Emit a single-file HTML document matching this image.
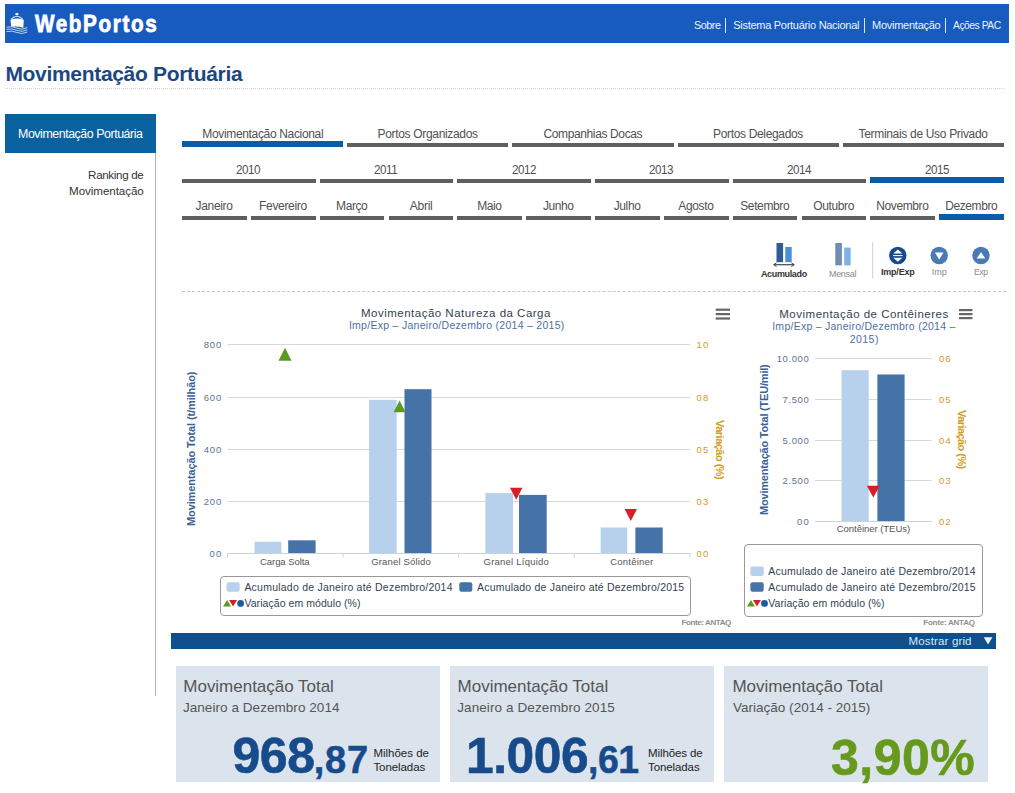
<!DOCTYPE html>
<html lang="pt-BR"><head><meta charset="utf-8"><title>WebPortos - Movimentação Portuária</title>
<style>
html,body{margin:0;padding:0;background:#fff;width:1015px;height:793px;overflow:hidden}
body{position:relative;font-family:"Liberation Sans", sans-serif}
.t{position:absolute;white-space:nowrap;line-height:1;font-family:"Liberation Sans", sans-serif}
svg{position:absolute;left:0;top:0;overflow:visible}
</style></head><body>
<div style="position:absolute;left:5.00px;top:4.00px;width:1004.00px;height:39.00px;background:#175bbe;"></div>
<svg width="1015" height="60" viewBox="0 0 1015 60" style="left:0;top:0">
<ellipse cx="16.9" cy="14.1" rx="1.7" ry="1.2" fill="#fff"/>
<path d="M10.9 19.4 Q16.9 13.0 23 19.4" stroke="#d6e4f8" stroke-width="1.1" fill="none"/>
<path d="M10.4 19.9 Q16.9 17.2 23.8 19.9 L23.3 27.8 Q17.2 25.6 11.3 26.8 Z" fill="#fff"/>
<g fill="none" stroke="#bcd3f3" stroke-width="1">
<path d="M6.5 27.2 Q12 25.8 17 28.1 T27.3 27.6"/>
<path d="M6.5 29.4 Q12 28 17 30.3 T27.3 29.8"/>
<path d="M6.5 31.6 Q12 30.2 17 32.5 T27.3 32"/>
</g>
</svg>
<div style="position:absolute;left:725.00px;top:18.00px;width:1.00px;height:15.00px;background:#dfe8f6;"></div>
<div style="position:absolute;left:864.00px;top:18.00px;width:1.00px;height:15.00px;background:#dfe8f6;"></div>
<div style="position:absolute;left:945.20px;top:18.00px;width:1.00px;height:15.00px;background:#dfe8f6;"></div>
<div style="position:absolute;left:5px;top:88px;width:1000px;height:1px;background:repeating-linear-gradient(90deg,#d4d4d4 0 1px,#fff 1px 2px)"></div>
<div style="position:absolute;left:5.00px;top:114.00px;width:151.00px;height:39.00px;background:#0a61a0;"></div>
<div style="position:absolute;left:155.00px;top:153.00px;width:1.00px;height:542.50px;background:#b3b3b3;"></div>
<div style="position:absolute;left:182.00px;top:141.00px;width:161.20px;height:6.00px;background:#0b5ca6;"></div>
<div style="position:absolute;left:347.20px;top:143.00px;width:161.20px;height:4.00px;background:#5f5f5f;"></div>
<div style="position:absolute;left:512.40px;top:143.00px;width:161.20px;height:4.00px;background:#5f5f5f;"></div>
<div style="position:absolute;left:677.60px;top:143.00px;width:161.20px;height:4.00px;background:#5f5f5f;"></div>
<div style="position:absolute;left:842.80px;top:143.00px;width:161.20px;height:4.00px;background:#5f5f5f;"></div>
<div style="position:absolute;left:182.00px;top:179.30px;width:133.67px;height:4.00px;background:#5f5f5f;"></div>
<div style="position:absolute;left:319.67px;top:179.30px;width:133.67px;height:4.00px;background:#5f5f5f;"></div>
<div style="position:absolute;left:457.33px;top:179.30px;width:133.67px;height:4.00px;background:#5f5f5f;"></div>
<div style="position:absolute;left:595.00px;top:179.30px;width:133.67px;height:4.00px;background:#5f5f5f;"></div>
<div style="position:absolute;left:732.67px;top:179.30px;width:133.67px;height:4.00px;background:#5f5f5f;"></div>
<div style="position:absolute;left:870.33px;top:177.30px;width:133.67px;height:6.00px;background:#0b5ca6;"></div>
<div style="position:absolute;left:182.00px;top:215.80px;width:64.83px;height:4.00px;background:#5f5f5f;"></div>
<div style="position:absolute;left:250.83px;top:215.80px;width:64.83px;height:4.00px;background:#5f5f5f;"></div>
<div style="position:absolute;left:319.67px;top:215.80px;width:64.83px;height:4.00px;background:#5f5f5f;"></div>
<div style="position:absolute;left:388.50px;top:215.80px;width:64.83px;height:4.00px;background:#5f5f5f;"></div>
<div style="position:absolute;left:457.33px;top:215.80px;width:64.83px;height:4.00px;background:#5f5f5f;"></div>
<div style="position:absolute;left:526.17px;top:215.80px;width:64.83px;height:4.00px;background:#5f5f5f;"></div>
<div style="position:absolute;left:595.00px;top:215.80px;width:64.83px;height:4.00px;background:#5f5f5f;"></div>
<div style="position:absolute;left:663.83px;top:215.80px;width:64.83px;height:4.00px;background:#5f5f5f;"></div>
<div style="position:absolute;left:732.67px;top:215.80px;width:64.83px;height:4.00px;background:#5f5f5f;"></div>
<div style="position:absolute;left:801.50px;top:215.80px;width:64.83px;height:4.00px;background:#5f5f5f;"></div>
<div style="position:absolute;left:870.33px;top:215.80px;width:64.83px;height:4.00px;background:#5f5f5f;"></div>
<div style="position:absolute;left:939.17px;top:213.80px;width:64.83px;height:6.00px;background:#0b5ca6;"></div>
<svg width="1015" height="300" viewBox="0 0 1015 300">
<rect x="776.5" y="243" width="6.6" height="19.2" fill="#2f5b95"/>
<rect x="785.3" y="247" width="6.4" height="15.2" fill="#4a8fd6"/>
<path d="M774.2 264.7 H793.7" stroke="#444" stroke-width="1.2"/>
<path d="M776.5 262.9 L773.6 264.7 L776.5 266.5 M791.4 262.9 L794.3 264.7 L791.4 266.5" stroke="#444" stroke-width="1" fill="none"/>
<rect x="835.3" y="243" width="6.6" height="22.4" fill="#6f8cb4"/>
<rect x="844.2" y="247.6" width="6.4" height="17.8" fill="#7fb0e3"/>
<rect x="872.2" y="242" width="1" height="36.6" fill="#cfcfcf"/>
<circle cx="897.8" cy="255.5" r="8.7" fill="#174a8c"/>
<path d="M893.3 253.5 L897.8 249.4 L902.3 253.5 Z M893.3 257.7 L897.8 261.8 L902.3 257.7 Z" fill="#fff"/>
<rect x="893" y="255.1" width="9.6" height="1" fill="#fff"/>
<circle cx="939.2" cy="255.5" r="8.7" fill="#4a79b3"/>
<path d="M934.9 252.5 H943.5 L939.2 259.4 Z" fill="#fff"/>
<circle cx="981" cy="255.5" r="8.7" fill="#4a79b3"/>
<path d="M976.7 258.6 H985.3 L981 252 Z" fill="#fff"/>
</svg>
<div style="position:absolute;left:182px;top:291px;width:824px;height:0;border-top:1px dashed #c8c8c8"></div>
<svg width="1015" height="793" viewBox="0 0 1015 793">
<rect x="715.7" y="308.60" width="14.30" height="2.2" fill="#666"/>
<rect x="715.7" y="313.00" width="14.30" height="2.2" fill="#666"/>
<rect x="715.7" y="317.40" width="14.30" height="2.2" fill="#666"/>
<rect x="227.5" y="344" width="462.4" height="1" fill="#d8d8d8"/>
<rect x="227.5" y="397" width="462.4" height="1" fill="#d8d8d8"/>
<rect x="227.5" y="449" width="462.4" height="1" fill="#d8d8d8"/>
<rect x="227.5" y="501" width="462.4" height="1" fill="#d8d8d8"/>
<rect x="227.5" y="553" width="462.4" height="1" fill="#c9d3dc"/>
<rect x="227.00" y="553" width="1" height="4.5" fill="#c9d3dc"/>
<rect x="342.60" y="553" width="1" height="4.5" fill="#c9d3dc"/>
<rect x="458.20" y="553" width="1" height="4.5" fill="#c9d3dc"/>
<rect x="573.80" y="553" width="1" height="4.5" fill="#c9d3dc"/>
<rect x="689.40" y="553" width="1" height="4.5" fill="#c9d3dc"/>
<rect x="254.5" y="541.7" width="26.90" height="11.30" fill="#b7d1ec"/>
<rect x="288.2" y="540.3" width="27.40" height="12.70" fill="#4573a7"/>
<rect x="369.1" y="399.8" width="27.60" height="153.20" fill="#b7d1ec"/>
<rect x="404.5" y="389.2" width="27.00" height="163.80" fill="#4573a7"/>
<rect x="485.4" y="493.1" width="27.60" height="59.90" fill="#b7d1ec"/>
<rect x="519.0" y="494.9" width="27.70" height="58.10" fill="#4573a7"/>
<rect x="600.6" y="527.5" width="26.60" height="25.50" fill="#b7d1ec"/>
<rect x="635.4" y="527.5" width="27.30" height="25.50" fill="#4573a7"/>
<path d="M278.50 360.70 L285.00 347.70 L291.50 360.70 Z" fill="#5a9a1c"/>
<path d="M393.60 412.20 L399.60 400.50 L405.60 412.20 Z" fill="#5a9a1c"/>
<path d="M509.95 487.80 L516.20 499.80 L522.45 487.80 Z" fill="#d81f26"/>
<path d="M624.55 509.00 L630.80 521.00 L637.05 509.00 Z" fill="#d81f26"/>
<rect x="220.5" y="576.5" width="470" height="39" rx="3.5" ry="3.5" fill="none" stroke="#999" stroke-width="1"/>
<rect x="226.6" y="582.3" width="13" height="9.5" rx="2" fill="#b7d1ec"/>
<rect x="459.3" y="582.3" width="13" height="9.5" rx="2" fill="#4573a7"/>
<path d="M223.10 606.60 L227.05 600.10 L231.00 606.60 Z" fill="#5a9a1c"/>
<path d="M229.10 600.10 L233.05 606.60 L237.00 600.10 Z" fill="#d81f26"/>
<circle cx="240.60" cy="603.40" r="3.4" fill="#1b5ba6"/>
<rect x="959" y="309.00" width="13.50" height="2.2" fill="#666"/>
<rect x="959" y="313.00" width="13.50" height="2.2" fill="#666"/>
<rect x="959" y="317.00" width="13.50" height="2.2" fill="#666"/>
<rect x="814.8" y="358" width="117" height="1" fill="#d8d8d8"/>
<rect x="814.8" y="399" width="117" height="1" fill="#d8d8d8"/>
<rect x="814.8" y="440" width="117" height="1" fill="#d8d8d8"/>
<rect x="814.8" y="480" width="117" height="1" fill="#d8d8d8"/>
<rect x="814.8" y="521" width="117" height="1" fill="#c9d3dc"/>
<rect x="841.5" y="370.2" width="27.2" height="150.80" fill="#b7d1ec"/>
<rect x="877.4" y="374.5" width="27.2" height="146.50" fill="#4573a7"/>
<path d="M866.80 485.80 L873.30 497.60 L879.80 485.80 Z" fill="#d81f26"/>
<rect x="744.5" y="544.5" width="238" height="72" rx="3.5" ry="3.5" fill="none" stroke="#999" stroke-width="1"/>
<rect x="750.4" y="566.5" width="13.3" height="9.5" rx="2" fill="#b7d1ec"/>
<rect x="750.4" y="582.2" width="13.3" height="9.5" rx="2" fill="#4573a7"/>
<path d="M747.00 606.60 L750.95 600.10 L754.90 606.60 Z" fill="#5a9a1c"/>
<path d="M753.00 600.10 L756.95 606.60 L760.90 600.10 Z" fill="#d81f26"/>
<circle cx="764.50" cy="603.40" r="3.4" fill="#1b5ba6"/>
</svg>
<div style="position:absolute;left:171.00px;top:633.00px;width:824.70px;height:16.00px;background:#0e4f8c;"></div>
<svg width="1015" height="793" viewBox="0 0 1015 793"><path d="M983.7 637.3 H992.4 L988.05 644.6 Z" fill="#eef4fb"/></svg>
<div style="position:absolute;left:175.70px;top:666.30px;width:264.30px;height:116.00px;background:#dbe4ed;"></div>
<div style="position:absolute;left:450.00px;top:666.30px;width:263.70px;height:116.00px;background:#dbe4ed;"></div>
<div style="position:absolute;left:724.00px;top:666.30px;width:264.40px;height:116.00px;background:#dbe4ed;"></div>
<div class="t" style="left:34.80px;top:12.00px;font-size:24px;font-weight:bold;color:#fff;letter-spacing:1.910px;-webkit-text-stroke:0.8px #fff;transform-origin:0 0;transform:scaleX(0.86)">WebPortos</div>
<div class="t" style="left:693.70px;top:20.00px;font-size:11px;font-weight:normal;color:#eef3fb;letter-spacing:-0.460px;;transform-origin:0 0;transform:scaleX(0.9782676954938689)">Sobre</div>
<div class="t" style="left:733.30px;top:20.00px;font-size:11px;font-weight:normal;color:#eef3fb;letter-spacing:-0.286px;">Sistema Portuário Nacional</div>
<div class="t" style="left:872.00px;top:20.00px;font-size:11px;font-weight:normal;color:#eef3fb;letter-spacing:-0.256px;">Movimentação</div>
<div class="t" style="left:953.20px;top:20.00px;font-size:11px;font-weight:normal;color:#eef3fb;letter-spacing:-0.482px;;transform-origin:0 0;transform:scaleX(0.933571522858273)">Ações PAC</div>
<div class="t" style="left:5.40px;top:63.00px;font-size:21px;font-weight:bold;color:#1a4782;letter-spacing:-0.315px;">Movimentação Portuária</div>
<div class="t" style="left:18.01px;top:128.00px;font-size:12.5px;font-weight:normal;color:#fff;letter-spacing:-0.454px;;transform-origin:0 0;transform:scaleX(0.9919880368621443)">Movimentação Portuária</div>
<div class="t" style="left:88.10px;top:169.00px;font-size:11.6px;font-weight:normal;color:#333;letter-spacing:-0.334px;">Ranking de</div>
<div class="t" style="left:69.10px;top:185.00px;font-size:11.6px;font-weight:normal;color:#333;letter-spacing:-0.068px;">Movimentação</div>
<div class="t" style="left:202.28px;top:128.00px;font-size:12px;font-weight:normal;color:#505050;letter-spacing:-0.338px;">Movimentação Nacional</div>
<div class="t" style="left:377.58px;top:128.00px;font-size:12px;font-weight:normal;color:#505050;letter-spacing:-0.331px;">Portos Organizados</div>
<div class="t" style="left:543.42px;top:128.00px;font-size:12px;font-weight:normal;color:#505050;letter-spacing:-0.370px;">Companhias Docas</div>
<div class="t" style="left:713.03px;top:128.00px;font-size:12px;font-weight:normal;color:#505050;letter-spacing:-0.337px;">Portos Delegados</div>
<div class="t" style="left:858.51px;top:128.00px;font-size:12px;font-weight:normal;color:#505050;letter-spacing:-0.316px;">Terminais de Uso Privado</div>
<div class="t" style="left:236.40px;top:164.00px;font-size:12px;font-weight:normal;color:#505050;letter-spacing:-0.464px;;transform-origin:0 0;transform:scaleX(0.9699602457535246)">2010</div>
<div class="t" style="left:374.48px;top:164.00px;font-size:12px;font-weight:normal;color:#505050;letter-spacing:-0.463px;;transform-origin:0 0;transform:scaleX(0.9716630540399128)">2011</div>
<div class="t" style="left:511.74px;top:164.00px;font-size:12px;font-weight:normal;color:#505050;letter-spacing:-0.464px;;transform-origin:0 0;transform:scaleX(0.9699602457535225)">2012</div>
<div class="t" style="left:649.40px;top:164.00px;font-size:12px;font-weight:normal;color:#505050;letter-spacing:-0.464px;;transform-origin:0 0;transform:scaleX(0.9699602457535246)">2013</div>
<div class="t" style="left:787.07px;top:164.00px;font-size:12px;font-weight:normal;color:#505050;letter-spacing:-0.464px;;transform-origin:0 0;transform:scaleX(0.9699602457535246)">2014</div>
<div class="t" style="left:924.74px;top:164.00px;font-size:12px;font-weight:normal;color:#505050;letter-spacing:-0.464px;;transform-origin:0 0;transform:scaleX(0.9699602457535246)">2015</div>
<div class="t" style="left:195.57px;top:200.00px;font-size:12px;font-weight:normal;color:#505050;letter-spacing:-0.331px;">Janeiro</div>
<div class="t" style="left:259.02px;top:200.00px;font-size:12px;font-weight:normal;color:#505050;letter-spacing:-0.319px;">Fevereiro</div>
<div class="t" style="left:336.09px;top:200.00px;font-size:12px;font-weight:normal;color:#505050;letter-spacing:-0.421px;">Março</div>
<div class="t" style="left:409.83px;top:200.00px;font-size:12px;font-weight:normal;color:#505050;letter-spacing:-0.292px;">Abril</div>
<div class="t" style="left:477.24px;top:200.00px;font-size:12px;font-weight:normal;color:#505050;letter-spacing:-0.439px;">Maio</div>
<div class="t" style="left:542.90px;top:200.00px;font-size:12px;font-weight:normal;color:#505050;letter-spacing:-0.413px;">Junho</div>
<div class="t" style="left:613.64px;top:200.00px;font-size:12px;font-weight:normal;color:#505050;letter-spacing:-0.363px;">Julho</div>
<div class="t" style="left:678.35px;top:200.00px;font-size:12px;font-weight:normal;color:#505050;letter-spacing:-0.377px;">Agosto</div>
<div class="t" style="left:740.22px;top:200.00px;font-size:12px;font-weight:normal;color:#505050;letter-spacing:-0.374px;">Setembro</div>
<div class="t" style="left:813.17px;top:200.00px;font-size:12px;font-weight:normal;color:#505050;letter-spacing:-0.364px;">Outubro</div>
<div class="t" style="left:876.30px;top:200.00px;font-size:12px;font-weight:normal;color:#505050;letter-spacing:-0.398px;">Novembro</div>
<div class="t" style="left:945.14px;top:200.00px;font-size:12px;font-weight:normal;color:#505050;letter-spacing:-0.398px;">Dezembro</div>
<div class="t" style="left:760.90px;top:270.00px;font-size:9px;font-weight:bold;color:#333;letter-spacing:-0.338px;">Acumulado</div>
<div class="t" style="left:829.00px;top:270.00px;font-size:9px;font-weight:normal;color:#8a8a8a;letter-spacing:-0.323px;">Mensal</div>
<div class="t" style="left:881.00px;top:268.00px;font-size:9px;font-weight:bold;color:#333;letter-spacing:-0.218px;">Imp/Exp</div>
<div class="t" style="left:931.70px;top:268.00px;font-size:9px;font-weight:normal;color:#8a8a8a;letter-spacing:0.051px;">Imp</div>
<div class="t" style="left:974.00px;top:268.00px;font-size:9px;font-weight:normal;color:#8a8a8a;letter-spacing:-0.468px;;transform-origin:0 0;transform:scaleX(0.9611086614173229)">Exp</div>
<div class="t" style="left:361.00px;top:308.00px;font-size:11.5px;font-weight:normal;color:#333f50;letter-spacing:0.491px;">Movimentação Natureza da Carga</div>
<div class="t" style="left:348.90px;top:320.00px;font-size:10.5px;font-weight:normal;color:#4f6f9f;letter-spacing:0.285px;">Imp/Exp – Janeiro/Dezembro (2014 – 2015)</div>
<div class="t" style="left:203.78px;top:340.00px;font-size:9.5px;font-weight:normal;color:#5b7396;letter-spacing:0.778px;">800</div>
<div class="t" style="left:203.78px;top:393.00px;font-size:9.5px;font-weight:normal;color:#5b7396;letter-spacing:0.778px;">600</div>
<div class="t" style="left:203.78px;top:445.00px;font-size:9.5px;font-weight:normal;color:#5b7396;letter-spacing:0.778px;">400</div>
<div class="t" style="left:203.78px;top:497.00px;font-size:9.5px;font-weight:normal;color:#5b7396;letter-spacing:0.778px;">200</div>
<div class="t" style="left:209.59px;top:549.00px;font-size:9.5px;font-weight:normal;color:#5b7396;letter-spacing:1.028px;">00</div>
<div class="t" style="left:696.60px;top:340.00px;font-size:9.5px;font-weight:normal;color:#d29a1c;letter-spacing:1.028px;">10</div>
<div class="t" style="left:696.60px;top:393.00px;font-size:9.5px;font-weight:normal;color:#d29a1c;letter-spacing:1.028px;">08</div>
<div class="t" style="left:696.60px;top:445.00px;font-size:9.5px;font-weight:normal;color:#d29a1c;letter-spacing:1.028px;">05</div>
<div class="t" style="left:696.60px;top:497.00px;font-size:9.5px;font-weight:normal;color:#d29a1c;letter-spacing:1.028px;">03</div>
<div class="t" style="left:696.60px;top:549.00px;font-size:9.5px;font-weight:normal;color:#d29a1c;letter-spacing:1.028px;">00</div>
<div class="t" style="left:185.85px;top:525.80px;font-size:11px;font-weight:bold;color:#3a619a;letter-spacing:-0.108px;transform-origin:0 0;transform:rotate(-90deg)">Movimentação Total (t/milhão)</div>
<div class="t" style="left:724.55px;top:419.60px;font-size:11px;font-weight:bold;color:#d49a1a;letter-spacing:-0.514px;transform-origin:0 0;transform:rotate(90deg)">Variação (%)</div>
<div class="t" style="left:260.00px;top:557.00px;font-size:9.5px;font-weight:normal;color:#555;letter-spacing:-0.058px;">Carga Solta</div>
<div class="t" style="left:371.20px;top:557.00px;font-size:9.5px;font-weight:normal;color:#555;letter-spacing:0.160px;">Granel Sólido</div>
<div class="t" style="left:483.60px;top:557.00px;font-size:9.5px;font-weight:normal;color:#555;letter-spacing:0.220px;">Granel Líquido</div>
<div class="t" style="left:610.20px;top:557.00px;font-size:9.5px;font-weight:normal;color:#555;letter-spacing:0.234px;">Contêiner</div>
<div class="t" style="left:244.40px;top:582.00px;font-size:10.5px;font-weight:normal;color:#333f50;letter-spacing:0.230px;">Acumulado de Janeiro até Dezembro/2014</div>
<div class="t" style="left:477.00px;top:582.00px;font-size:10.5px;font-weight:normal;color:#333f50;letter-spacing:0.203px;">Acumulado de Janeiro até Dezembro/2015</div>
<div class="t" style="left:244.40px;top:598.00px;font-size:10.5px;font-weight:normal;color:#333f50;letter-spacing:0.063px;">Variação em módulo (%)</div>
<div class="t" style="left:681.40px;top:619.00px;font-size:8px;font-weight:bold;color:#8e8e8e;letter-spacing:-0.390px;">Fonte: ANTAQ</div>
<div class="t" style="left:779.30px;top:309.00px;font-size:11.5px;font-weight:normal;color:#333f50;letter-spacing:0.495px;">Movimentação de Contêineres</div>
<div class="t" style="left:772.20px;top:321.00px;font-size:10.5px;font-weight:normal;color:#4f6f9f;letter-spacing:0.262px;">Imp/Exp – Janeiro/Dezembro (2014 –</div>
<div class="t" style="left:849.80px;top:334.00px;font-size:10.5px;font-weight:normal;color:#4f6f9f;letter-spacing:0.435px;">2015)</div>
<div class="t" style="left:776.75px;top:354.00px;font-size:9.5px;font-weight:normal;color:#5b7396;letter-spacing:0.575px;">10.000</div>
<div class="t" style="left:782.56px;top:395.00px;font-size:9.5px;font-weight:normal;color:#5b7396;letter-spacing:0.587px;">7.500</div>
<div class="t" style="left:782.56px;top:436.00px;font-size:9.5px;font-weight:normal;color:#5b7396;letter-spacing:0.587px;">5.000</div>
<div class="t" style="left:782.56px;top:476.00px;font-size:9.5px;font-weight:normal;color:#5b7396;letter-spacing:0.587px;">2.500</div>
<div class="t" style="left:797.09px;top:517.00px;font-size:9.5px;font-weight:normal;color:#5b7396;letter-spacing:1.028px;">00</div>
<div class="t" style="left:938.90px;top:354.00px;font-size:9.5px;font-weight:normal;color:#d29a1c;letter-spacing:1.028px;">06</div>
<div class="t" style="left:938.90px;top:395.00px;font-size:9.5px;font-weight:normal;color:#d29a1c;letter-spacing:1.028px;">05</div>
<div class="t" style="left:938.90px;top:436.00px;font-size:9.5px;font-weight:normal;color:#d29a1c;letter-spacing:1.028px;">04</div>
<div class="t" style="left:938.90px;top:476.00px;font-size:9.5px;font-weight:normal;color:#d29a1c;letter-spacing:1.028px;">03</div>
<div class="t" style="left:938.90px;top:517.00px;font-size:9.5px;font-weight:normal;color:#d29a1c;letter-spacing:1.028px;">02</div>
<div class="t" style="left:758.85px;top:514.70px;font-size:11px;font-weight:bold;color:#3a619a;letter-spacing:-0.203px;transform-origin:0 0;transform:rotate(-90deg)">Movimentação Total (TEU/mil)</div>
<div class="t" style="left:966.55px;top:410.10px;font-size:11px;font-weight:bold;color:#d49a1a;letter-spacing:-0.560px;transform-origin:0 0;transform:rotate(90deg)">Variação (%)</div>
<div class="t" style="left:836.70px;top:524.00px;font-size:9.5px;font-weight:normal;color:#555;letter-spacing:-0.030px;">Contêiner (TEUs)</div>
<div class="t" style="left:768.30px;top:566.00px;font-size:10.5px;font-weight:normal;color:#333f50;letter-spacing:0.209px;">Acumulado de Janeiro até Dezembro/2014</div>
<div class="t" style="left:768.30px;top:582.00px;font-size:10.5px;font-weight:normal;color:#333f50;letter-spacing:0.209px;">Acumulado de Janeiro até Dezembro/2015</div>
<div class="t" style="left:768.30px;top:598.00px;font-size:10.5px;font-weight:normal;color:#333f50;letter-spacing:0.068px;">Variação em módulo (%)</div>
<div class="t" style="left:923.30px;top:619.00px;font-size:8px;font-weight:bold;color:#8e8e8e;letter-spacing:-0.235px;">Fonte: ANTAQ</div>
<div class="t" style="left:908.60px;top:636.00px;font-size:11.5px;font-weight:normal;color:#dce8f5;letter-spacing:0.141px;">Mostrar grid</div>
<div class="t" style="left:183.30px;top:678.00px;font-size:17px;font-weight:normal;color:#555;letter-spacing:-0.018px;">Movimentação Total</div>
<div class="t" style="left:182.90px;top:701.00px;font-size:13.5px;font-weight:normal;color:#555;letter-spacing:0.058px;">Janeiro a Dezembro 2014</div>
<div class="t" style="left:232.40px;top:731.00px;font-size:50px;font-weight:bold;color:#174b8b;letter-spacing:-0.358px;-webkit-text-stroke:0.6px #174b8b">968</div>
<div class="t" style="left:313.70px;top:741.00px;font-size:38px;font-weight:bold;color:#174b8b;letter-spacing:0.854px;-webkit-text-stroke:0.5px #174b8b">,87</div>
<div class="t" style="left:373.40px;top:748.00px;font-size:11.5px;font-weight:normal;color:#222;letter-spacing:-0.002px;">Milhões de</div>
<div class="t" style="left:373.40px;top:762.00px;font-size:11.5px;font-weight:normal;color:#222;letter-spacing:-0.072px;">Toneladas</div>
<div class="t" style="left:457.60px;top:678.00px;font-size:17px;font-weight:normal;color:#555;letter-spacing:-0.018px;">Movimentação Total</div>
<div class="t" style="left:457.20px;top:701.00px;font-size:13.5px;font-weight:normal;color:#555;letter-spacing:0.103px;">Janeiro a Dezembro 2015</div>
<div class="t" style="left:466.02px;top:731.00px;font-size:50px;font-weight:bold;color:#174b8b;letter-spacing:-0.453px;-webkit-text-stroke:0.6px #174b8b;transform-origin:0 0;transform:scaleX(0.9940617847112867)">1.006</div>
<div class="t" style="left:588.03px;top:741.00px;font-size:38px;font-weight:bold;color:#174b8b;letter-spacing:-0.457px;-webkit-text-stroke:0.5px #174b8b;transform-origin:0 0;transform:scaleX(0.9843877629652462)">,61</div>
<div class="t" style="left:648.00px;top:748.00px;font-size:11.5px;font-weight:normal;color:#222;letter-spacing:-0.102px;">Milhões de</div>
<div class="t" style="left:648.00px;top:762.00px;font-size:11.5px;font-weight:normal;color:#222;letter-spacing:-0.097px;">Toneladas</div>
<div class="t" style="left:732.40px;top:678.00px;font-size:17px;font-weight:normal;color:#555;letter-spacing:-0.018px;">Movimentação Total</div>
<div class="t" style="left:733.00px;top:701.00px;font-size:13.5px;font-weight:normal;color:#555;letter-spacing:0.010px;">Variação (2014 - 2015)</div>
<div class="t" style="left:831.00px;top:733.00px;font-size:50px;font-weight:bold;color:#66991c;letter-spacing:0.496px;-webkit-text-stroke:0.6px #66991c">3,90%</div>
</body></html>
